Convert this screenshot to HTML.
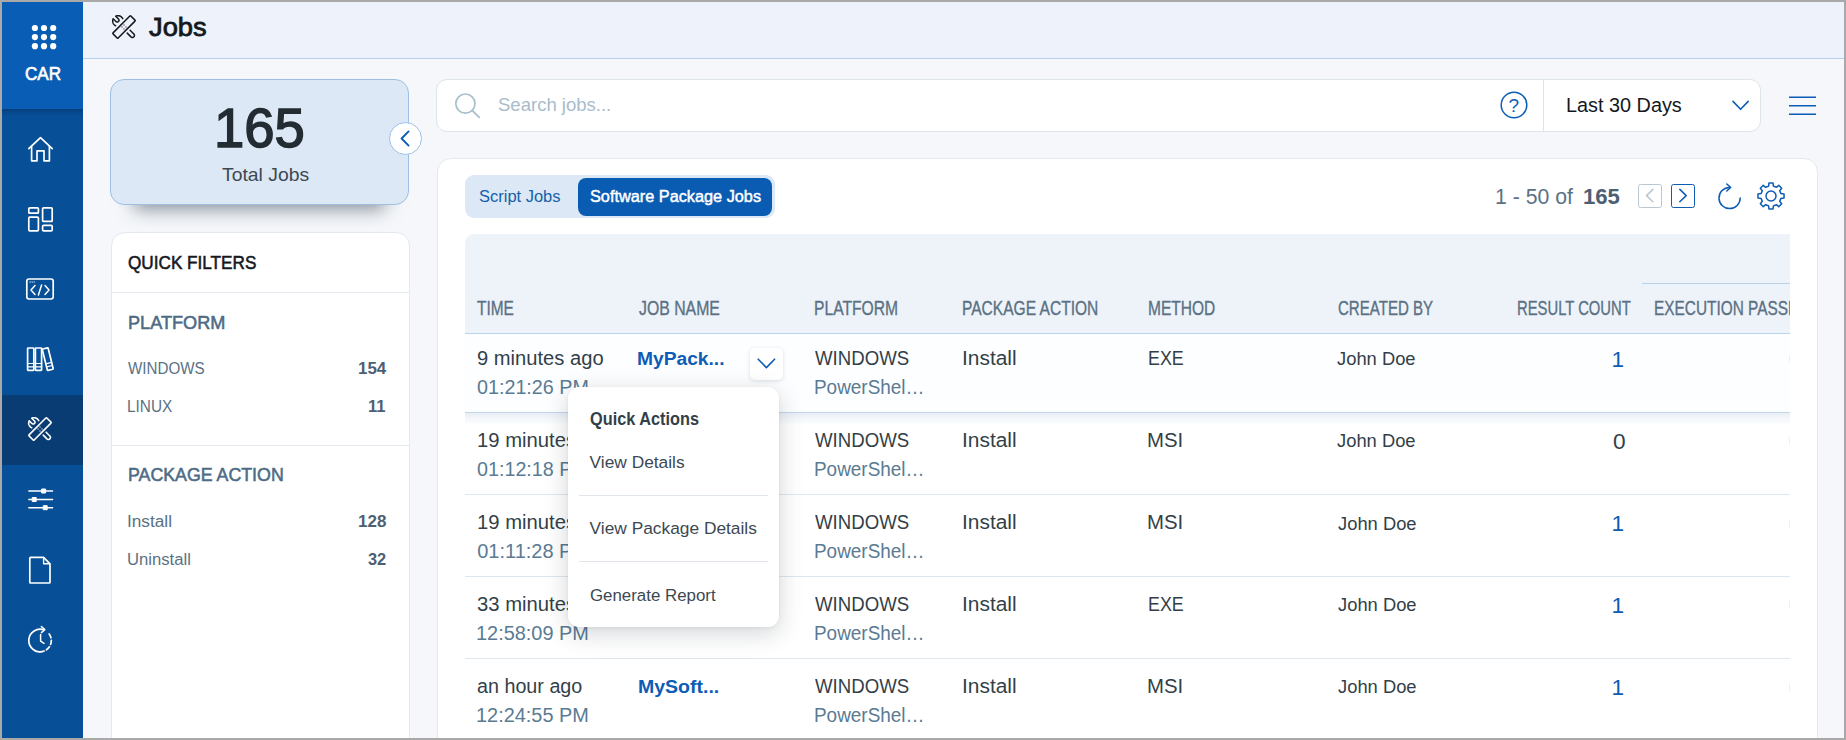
<!DOCTYPE html>
<html lang="en">
<head>
<meta charset="utf-8">
<title>Jobs</title>
<style>
*{box-sizing:border-box;margin:0;padding:0}
html,body{width:1846px;height:740px;overflow:hidden;background:#f5f7fa}
body{font-family:"Liberation Sans",sans-serif;position:relative;color:#333f48}
.t{position:absolute;white-space:nowrap}
.abs{position:absolute}
.frame{position:absolute;left:0;top:0;width:1846px;height:740px;box-shadow:inset 0 0 0 2px #a9a9a9;pointer-events:none;z-index:100}
.side{position:absolute;left:0;top:0;width:83px;height:740px;background:#074f96;overflow:hidden}
.brand{position:absolute;left:0;top:0;width:83px;height:109px;background:#0a5db4;box-shadow:0 2px 4px rgba(0,20,60,.35)}
.active{position:absolute;left:0;top:395px;width:83px;height:70px;background:#083c73}
.top{position:absolute;left:83px;top:0;width:1763px;height:59px;background:#eef3fb;border-bottom:1px solid #b5d0ea}
.stat{position:absolute;left:110px;top:79px;width:299px;height:126px;background:#dce8f5;border:1px solid #9dbfe4;border-radius:14px;box-shadow:0 28px 17px -24px rgba(25,40,60,.5)}
.collapse{position:absolute;left:389px;top:122px;width:33px;height:33px;border-radius:50%;background:#fff;border:1px solid #9dbfe4}
.qf{position:absolute;left:111px;top:232px;width:299px;height:520px;background:#fff;border:1px solid #e3e9ef;border-radius:14px}
.hr{position:absolute;height:1px;background:#e3e9ef}
.search{position:absolute;left:436px;top:79px;width:1325px;height:53px;background:#fff;border:1px solid #dde4ea;border-radius:11px}
.card{position:absolute;left:437px;top:158px;width:1381px;height:600px;background:#fff;border:1px solid #e3e9ef;border-radius:14px}
.tabs{position:absolute;left:465px;top:175px;width:309.5px;height:43px;background:#dce8f5;border-radius:9px}
.tabon{position:absolute;left:578px;top:178px;width:194px;height:38px;background:#0a5cb3;border-radius:8px}
.thead{position:absolute;left:465px;top:234px;width:1325px;height:100px;background:#eef3fa;border-bottom:1px solid #b9d3ea;border-radius:9px 0 0 0}
.rowline{position:absolute;left:465px;width:1325px;height:1px;background:#dfe7ee}
.pg{position:absolute;top:183.8px;width:24px;height:24px;border-radius:2.5px;border:1.4px solid #0d5cb5}
.ddbtn{position:absolute;left:750px;top:348px;width:33px;height:32px;border-radius:5px;background:#fff;box-shadow:0 1px 4px rgba(60,80,110,.18)}
.pop{position:absolute;left:568px;top:387px;width:211px;height:240px;border-radius:11px;background:#fff;box-shadow:0 6px 24px rgba(20,30,45,.19),0 1px 4px rgba(20,30,45,.06)}
svg{position:absolute;overflow:visible}
</style>
</head>
<body>
<div class="side"><div class="active"></div><div class="brand"></div></div>
<svg width="83" height="109" style="left:0;top:0" fill="#fff"><circle cx="34.9" cy="28" r="3.1"/><circle cx="44" cy="28" r="3.1"/><circle cx="53.2" cy="28" r="3.1"/><circle cx="34.9" cy="37.1" r="3.1"/><circle cx="44" cy="37.1" r="3.1"/><circle cx="53.2" cy="37.1" r="3.1"/><circle cx="34.9" cy="46.2" r="3.1"/><circle cx="44" cy="46.2" r="3.1"/><circle cx="53.2" cy="46.2" r="3.1"/></svg>
<div class="t" style="top:64.04px;font-size:17.5px;line-height:21px;color:#fff;-webkit-text-stroke:0.6px #fff;left:25.00px;transform:scaleX(0.9777);transform-origin:left center;">CAR</div>
<svg width="83" height="740" style="left:0;top:0" fill="none" stroke="#fff" stroke-width="1.7" stroke-linecap="round" stroke-linejoin="round"><path d="M28.8 148.6 L40.5 137.6 L52.2 148.6"/><path d="M31.6 146.4 V160.8 H37 V150.8 H44 V160.8 H49.4 V146.4"/><rect x="28.8" y="207.8" width="9.6" height="5.4" rx="1"/><rect x="28.8" y="217.2" width="9.6" height="13.6" rx="1"/><rect x="42.6" y="207.8" width="9.6" height="13.6" rx="1"/><rect x="42.6" y="225.4" width="9.6" height="5.4" rx="1"/><rect x="26.8" y="279" width="26.4" height="20" rx="2.2"/><path d="M35 285.5 L31 290 L35 294.5 M45 285.5 L49 290 L45 294.5 M41.6 285 L38.4 295" stroke-width="1.5"/><path d="M30 282 h.4 M32 282 h.4 M34 282 h.4" stroke-width="1"/><rect x="27.6" y="348" width="6.2" height="22.4" rx=".6"/><rect x="35.4" y="348" width="6.2" height="22.4" rx=".6"/><path d="M27.6 363.5 h6.2 M27.6 366.8 h6.2 M35.4 363.5 h6.2 M35.4 366.8 h6.2" stroke-width="1.2"/><g transform="rotate(-14 47.4 359)"><rect x="44.7" y="348.2" width="6" height="22" rx=".6"/><path d="M44.7 363.3 h6 M44.7 366.5 h6" stroke-width="1.2"/></g><path d="M28.8 491 H52.6 M28.8 499.5 H52.6 M28.8 507.7 H52.6" stroke-width="1.4"/><rect x="42" y="489" width="3.6" height="4" fill="#fff" stroke-width="1"/><rect x="32.6" y="497.5" width="3.6" height="4" fill="#fff" stroke-width="1"/><rect x="43.6" y="505.7" width="3.6" height="4" fill="#fff" stroke-width="1"/><path d="M30.6 557.4 H43.6 L50 563.8 V582.2 Q50 583 49.2 583 H30.6 Q29.8 583 29.8 582.2 V558.2 Q29.8 557.4 30.6 557.4 Z"/><path d="M43.6 557.6 V563.8 H49.8" stroke-width="1.4"/><path d="M43.4 629.7 A11.3 11.3 0 1 0 40 651.8"/><path d="M40 651.8 A11.3 11.3 0 0 0 51.3 640.5 A11.3 11.3 0 0 0 47.6 632.1" stroke-dasharray="4.2 2.6"/><path d="M41.4 626.6 L44.8 629.6 L41.4 632.6" stroke-width="1.5"/><path d="M40.6 634.6 V641.2 L44 643.4" stroke-width="1.5"/></svg>
<svg width="30" height="30" style="left:24.9px;top:414px" viewBox="-15 -15 30 30" fill="none" stroke="#fff" stroke-width="1.6" stroke-linecap="round" stroke-linejoin="round"><g transform="scale(1)"><rect x="-12.6" y="-3.6" width="25.2" height="7.2" rx=".7" transform="rotate(-45)"/><g fill="#cfe0f2" stroke="none"><circle cx="-2.00" cy="0.00" r=".7"/><circle cx="2.00" cy="0.00" r=".7"/><circle cx="0.00" cy="2.00" r=".7"/><circle cx="0.00" cy="-2.00" r=".7"/></g><path d="M6.12 3.22 L9.86 6.97 L10.24 7.48 L10.44 8.09 L10.44 8.74 L10.24 9.35 L9.86 9.86 L9.35 10.24 L8.74 10.44 L8.09 10.44 L7.48 10.24 L6.97 9.86 L3.22 6.12"/><path d="M-1.26 -8.35 L-1.54 -8.86 L-1.89 -9.34 L-2.28 -9.78 L-2.72 -10.17 L-3.20 -10.50 L-3.71 -10.79 L-4.26 -11.01 L-4.82 -11.18 L-5.40 -11.28 L-5.99 -11.31 L-6.57 -11.28 L-7.15 -11.19 L-7.72 -11.03 L-8.26 -10.81 L-5.52 -8.06 L-5.52 -8.06 L-5.18 -7.61 L-5.01 -7.07 L-5.01 -6.51 L-5.18 -5.97 L-5.52 -5.52 L-5.97 -5.18 L-6.51 -5.01 L-7.07 -5.01 L-7.61 -5.18 L-8.06 -5.52 L-10.81 -8.26 L-10.81 -8.26 L-11.03 -7.72 L-11.19 -7.15 L-11.28 -6.57 L-11.31 -5.99 L-11.28 -5.40 L-11.18 -4.82 L-11.01 -4.26 L-10.79 -3.71 L-10.50 -3.20 L-10.17 -2.72 L-9.78 -2.28 L-9.34 -1.89 L-8.86 -1.54 L-8.35 -1.26"/></g></svg>
<div class="top"></div>
<svg width="30" height="30" style="left:108.65px;top:11.899999999999999px" viewBox="-15 -15 30 30" fill="none" stroke="#15191d" stroke-width="1.5" stroke-linecap="round" stroke-linejoin="round"><g transform="scale(1)"><rect x="-12.6" y="-3.6" width="25.2" height="7.2" rx=".7" transform="rotate(-45)"/><g fill="#6b3f63" stroke="none"><circle cx="-2.00" cy="0.00" r=".7"/><circle cx="2.00" cy="0.00" r=".7"/><circle cx="0.00" cy="2.00" r=".7"/><circle cx="0.00" cy="-2.00" r=".7"/></g><path d="M6.12 3.22 L9.86 6.97 L10.24 7.48 L10.44 8.09 L10.44 8.74 L10.24 9.35 L9.86 9.86 L9.35 10.24 L8.74 10.44 L8.09 10.44 L7.48 10.24 L6.97 9.86 L3.22 6.12"/><path d="M-1.26 -8.35 L-1.54 -8.86 L-1.89 -9.34 L-2.28 -9.78 L-2.72 -10.17 L-3.20 -10.50 L-3.71 -10.79 L-4.26 -11.01 L-4.82 -11.18 L-5.40 -11.28 L-5.99 -11.31 L-6.57 -11.28 L-7.15 -11.19 L-7.72 -11.03 L-8.26 -10.81 L-5.52 -8.06 L-5.52 -8.06 L-5.18 -7.61 L-5.01 -7.07 L-5.01 -6.51 L-5.18 -5.97 L-5.52 -5.52 L-5.97 -5.18 L-6.51 -5.01 L-7.07 -5.01 L-7.61 -5.18 L-8.06 -5.52 L-10.81 -8.26 L-10.81 -8.26 L-11.03 -7.72 L-11.19 -7.15 L-11.28 -6.57 L-11.31 -5.99 L-11.28 -5.40 L-11.18 -4.82 L-11.01 -4.26 L-10.79 -3.71 L-10.50 -3.20 L-10.17 -2.72 L-9.78 -2.28 L-9.34 -1.89 L-8.86 -1.54 L-8.35 -1.26"/></g></svg>
<div class="t" style="top:12.19px;font-size:26px;line-height:31px;color:#15191d;-webkit-text-stroke:0.8px #15191d;left:148.70px;transform:scaleX(1.0506);transform-origin:left center;">Jobs</div>
<div class="stat"></div>
<div class="t" style="top:98.20px;font-size:56px;line-height:60px;color:#232c33;-webkit-text-stroke:1.5px #232c33;left:214.46px;transform:scaleX(0.9726);transform-origin:left center;">165</div>
<div class="t" style="top:163.53px;font-size:18.67px;line-height:22px;color:#3c4852;left:221.80px;transform:scaleX(1.0374);transform-origin:left center;">Total Jobs</div>
<div class="collapse"></div>
<svg width="33" height="33" style="left:389px;top:122px" fill="none" stroke="#0d5cb5" stroke-width="1.9" stroke-linecap="round" stroke-linejoin="round"><path d="M19.6 9.4 L12.6 16.5 L19.6 23.6"/></svg>
<div class="qf"></div>
<div class="t" style="top:251.73px;font-size:18.67px;line-height:22px;color:#15191d;-webkit-text-stroke:0.55px #15191d;left:128.38px;transform:scaleX(0.9195);transform-origin:left center;">QUICK FILTERS</div>
<div class="hr" style="left:112px;top:292px;width:297px"></div>
<div class="t" style="top:312.43px;font-size:18.67px;line-height:22px;color:#4d6b85;-webkit-text-stroke:0.55px #4d6b85;left:127.60px;transform:scaleX(0.9716);transform-origin:left center;">PLATFORM</div>
<div class="t" style="top:358.76px;font-size:16px;line-height:19px;color:#5a7184;left:128.30px;transform:scaleX(0.9476);transform-origin:left center;">WINDOWS</div>
<div class="t" style="top:358.76px;font-size:16px;line-height:19px;color:#4d6073;left:358.15px;font-weight:bold;transform:scaleX(1.0544);transform-origin:left center;">154</div>
<div class="t" style="top:396.96px;font-size:16px;line-height:19px;color:#5a7184;left:127.34px;transform:scaleX(0.9623);transform-origin:left center;">LINUX</div>
<div class="t" style="top:396.96px;font-size:16px;line-height:19px;color:#4d6073;left:367.66px;font-weight:bold;transform:scaleX(1.0365);transform-origin:left center;">11</div>
<div class="hr" style="left:112px;top:445px;width:297px"></div>
<div class="t" style="top:464.23px;font-size:18.67px;line-height:22px;color:#4d6b85;-webkit-text-stroke:0.55px #4d6b85;left:127.82px;transform:scaleX(0.9527);transform-origin:left center;">PACKAGE ACTION</div>
<div class="t" style="top:511.86px;font-size:16px;line-height:19px;color:#5a7184;left:127.42px;transform:scaleX(1.076);transform-origin:left center;">Install</div>
<div class="t" style="top:511.86px;font-size:16px;line-height:19px;color:#4d6073;left:358.04px;font-weight:bold;transform:scaleX(1.0621);transform-origin:left center;">128</div>
<div class="t" style="top:549.76px;font-size:16px;line-height:19px;color:#5a7184;left:127.46px;transform:scaleX(1.0417);transform-origin:left center;">Uninstall</div>
<div class="t" style="top:549.76px;font-size:16px;line-height:19px;color:#4d6073;left:368.20px;font-weight:bold;transform:scaleX(1.0224);transform-origin:left center;">32</div>
<div class="search"></div>
<svg width="30" height="30" style="left:453px;top:91px" fill="none" stroke="#a9bfcc" stroke-width="1.7" stroke-linecap="round"><circle cx="12.4" cy="12.6" r="9.6"/><path d="M19.4 19.6 L26.2 26.4"/></svg>
<div class="t" style="top:94.23px;font-size:18.67px;line-height:22px;color:#a9bccb;left:498.00px;transform:scaleX(0.993);transform-origin:left center;">Search jobs...</div>
<svg width="30" height="30" style="left:1499px;top:90px" fill="none" stroke="#0d5cb5" stroke-width="1.5"><circle cx="15" cy="15" r="12.8"/></svg>
<div class="t" style="top:93.52px;font-size:19px;line-height:23px;color:#0d5cb5;left:1508.60px;">?</div>
<div class="abs" style="left:1543px;top:80px;width:1px;height:51px;background:#dde4ea"></div>
<div class="t" style="top:92.87px;font-size:20px;line-height:24px;color:#15191d;left:1565.51px;transform:scaleX(0.992);transform-origin:left center;">Last 30 Days</div>
<svg width="20" height="12" style="left:1731px;top:100px" fill="none" stroke="#0d5cb5" stroke-width="1.6" stroke-linecap="round" stroke-linejoin="round"><path d="M2 1.4 L9.6 9.3 L17.2 1.4"/></svg>
<svg width="28" height="20" style="left:1789px;top:96px" stroke="#0d5cb5" stroke-width="1.6"><path d="M0 1.2 H27 M0 9.7 H27 M0 18.2 H27"/></svg>
<div class="card"></div>
<div class="tabs"></div>
<div class="tabon"></div>
<div class="t" style="top:186.96px;font-size:16px;line-height:19px;color:#1460aa;left:479.30px;transform:scaleX(1.0298);transform-origin:left center;">Script Jobs</div>
<div class="t" style="top:186.96px;font-size:16px;line-height:19px;color:#fff;-webkit-text-stroke:0.45px #fff;left:589.62px;transform:scaleX(1.0176);transform-origin:left center;">Software Package Jobs</div>
<div class="t" style="top:184.31px;font-size:21.33px;line-height:26px;color:#5a7184;left:1495.41px;transform:scaleX(0.9945);transform-origin:left center;">1 - 50 of</div>
<div class="t" style="top:184.31px;font-size:21.33px;line-height:26px;color:#4d6073;left:1582.96px;font-weight:bold;transform:scaleX(1.0368);transform-origin:left center;">165</div>
<div class="pg" style="left:1638px;border-color:#b7c7d4"></div><div class="pg" style="left:1670.5px"></div>
<svg width="60" height="26" style="left:1638px;top:183.3px" fill="none" stroke-width="1.5" stroke-linecap="round" stroke-linejoin="round"><path d="M14.9 6.4 L8.5 12.6 L14.9 18.8" stroke="#b7c7d4"/><path d="M41.8 6.4 L48.2 12.6 L41.8 18.8" stroke="#0d5cb5"/></svg>
<svg width="30" height="30" style="left:1715px;top:182px" fill="none" stroke="#0d5cb5" stroke-width="1.5" stroke-linecap="round" stroke-linejoin="round"><path d="M14 5.4 A10.6 10.6 0 1 0 25.2 16"/><path d="M11.8 2 L15.6 5.4 L11.8 9"/></svg>
<svg width="30" height="30" style="left:1755.6px;top:181.2px" fill="none" stroke="#0d5cb5" stroke-width="1.5" stroke-linejoin="round"><path d="M12.62 5.08 L12.94 1.96 L17.06 1.96 L17.38 5.08 L20.33 6.30 L22.76 4.32 L25.68 7.24 L23.70 9.67 L24.92 12.62 L28.04 12.94 L28.04 17.06 L24.92 17.38 L23.70 20.33 L25.68 22.76 L22.76 25.68 L20.33 23.70 L17.38 24.92 L17.06 28.04 L12.94 28.04 L12.62 24.92 L9.67 23.70 L7.24 25.68 L4.32 22.76 L6.30 20.33 L5.08 17.38 L1.96 17.06 L1.96 12.94 L5.08 12.62 L6.30 9.67 L4.32 7.24 L7.24 4.32 L9.67 6.30 Z"/><circle cx="15" cy="15" r="5"/></svg>
<div class="thead"></div>
<div class="abs" style="left:1642px;top:283px;width:148px;height:1px;background:#b9d3ea"></div>
<div class="t" style="top:296.17px;font-size:20px;line-height:24px;color:#5a7184;-webkit-text-stroke:0.35px #5a7184;left:477.38px;transform:scaleX(0.7727);transform-origin:left center;">TIME</div>
<div class="t" style="top:296.17px;font-size:20px;line-height:24px;color:#5a7184;-webkit-text-stroke:0.35px #5a7184;left:639.17px;transform:scaleX(0.7915);transform-origin:left center;">JOB NAME</div>
<div class="t" style="top:296.17px;font-size:20px;line-height:24px;color:#5a7184;-webkit-text-stroke:0.35px #5a7184;left:813.89px;transform:scaleX(0.7834);transform-origin:left center;">PLATFORM</div>
<div class="t" style="top:296.17px;font-size:20px;line-height:24px;color:#5a7184;-webkit-text-stroke:0.35px #5a7184;left:962.10px;transform:scaleX(0.7778);transform-origin:left center;">PACKAGE ACTION</div>
<div class="t" style="top:296.17px;font-size:20px;line-height:24px;color:#5a7184;-webkit-text-stroke:0.35px #5a7184;left:1147.80px;transform:scaleX(0.7763);transform-origin:left center;">METHOD</div>
<div class="t" style="top:296.17px;font-size:20px;line-height:24px;color:#5a7184;-webkit-text-stroke:0.35px #5a7184;left:1337.52px;transform:scaleX(0.7525);transform-origin:left center;">CREATED BY</div>
<div class="t" style="top:296.17px;font-size:20px;line-height:24px;color:#5a7184;-webkit-text-stroke:0.35px #5a7184;left:1516.63px;transform:scaleX(0.7402);transform-origin:left center;">RESULT COUNT</div>
<div class="abs" style="left:1640px;top:290px;width:150px;height:40px;overflow:hidden"><div class="t" style="top:6.17px;font-size:20px;line-height:24px;color:#5a7184;-webkit-text-stroke:0.35px #5a7184;left:14.10px;transform:scaleX(0.77);transform-origin:left center;">EXECUTION PASSED</div>
</div>
<div class="abs" style="left:465px;top:334px;width:1325px;height:78px;background:#fdfeff"></div>
<div class="abs" style="left:465px;top:413px;width:1325px;height:12px;background:linear-gradient(#e9eff6,rgba(255,255,255,0))"></div>
<div class="rowline" style="top:412px;background:#c3d6e8"></div>
<div class="t" style="top:346.07px;font-size:20px;line-height:24px;color:#333f48;left:477.20px;transform:scaleX(1.0079);transform-origin:left center;">9 minutes ago</div>
<div class="t" style="top:375.07px;font-size:20px;line-height:24px;color:#5a7b93;left:477.20px;transform:scaleX(0.9863);transform-origin:left center;">01:21:26 PM</div>
<div class="t" style="top:347.53px;font-size:18.67px;line-height:22px;color:#0d5cb5;left:637.37px;font-weight:bold;transform:scaleX(1.0295);transform-origin:left center;">MyPack...</div>
<div class="t" style="top:346.07px;font-size:20px;line-height:24px;color:#333f48;left:814.50px;transform:scaleX(0.932);transform-origin:left center;">WINDOWS</div>
<div class="t" style="top:375.07px;font-size:20px;line-height:24px;color:#5a7b93;left:813.65px;transform:scaleX(0.9462);transform-origin:left center;">PowerShel…</div>
<div class="t" style="top:346.07px;font-size:20px;line-height:24px;color:#333f48;left:961.85px;transform:scaleX(1.0452);transform-origin:left center;">Install</div>
<div class="t" style="top:346.07px;font-size:20px;line-height:24px;color:#333f48;left:1147.51px;transform:scaleX(0.8945);transform-origin:left center;">EXE</div>
<div class="t" style="top:348.03px;font-size:18.67px;line-height:22px;color:#333f48;left:1336.50px;transform:scaleX(0.9838);transform-origin:left center;">John Doe</div>
<div class="t" style="top:346.34px;font-size:22.67px;line-height:27px;color:#0d5cb5;right:221.80px;">1</div>
<div class="abs" style="left:1788.5px;top:355px;width:1.5px;height:8px;background:#eef1f4;border-radius:1px"></div>
<div class="rowline" style="top:494px"></div>
<div class="t" style="top:428.07px;font-size:20px;line-height:24px;color:#333f48;left:476.80px;transform:scaleX(1.012);transform-origin:left center;">19 minutes ago</div>
<div class="t" style="top:457.07px;font-size:20px;line-height:24px;color:#5a7b93;left:477.20px;transform:scaleX(0.9863);transform-origin:left center;">01:12:18 PM</div>
<div class="t" style="top:429.53px;font-size:18.67px;line-height:22px;color:#0d5cb5;left:637.37px;font-weight:bold;transform:scaleX(1.0295);transform-origin:left center;">MyPack...</div>
<div class="t" style="top:428.07px;font-size:20px;line-height:24px;color:#333f48;left:814.50px;transform:scaleX(0.932);transform-origin:left center;">WINDOWS</div>
<div class="t" style="top:457.07px;font-size:20px;line-height:24px;color:#5a7b93;left:813.65px;transform:scaleX(0.9462);transform-origin:left center;">PowerShel…</div>
<div class="t" style="top:428.07px;font-size:20px;line-height:24px;color:#333f48;left:961.85px;transform:scaleX(1.0452);transform-origin:left center;">Install</div>
<div class="t" style="top:428.07px;font-size:20px;line-height:24px;color:#333f48;left:1147.38px;transform:scaleX(1.0182);transform-origin:left center;">MSI</div>
<div class="t" style="top:430.03px;font-size:18.67px;line-height:22px;color:#333f48;left:1336.50px;transform:scaleX(0.9838);transform-origin:left center;">John Doe</div>
<div class="t" style="top:428.34px;font-size:22.67px;line-height:27px;color:#333f48;right:220.50px;">0</div>
<div class="abs" style="left:1788.5px;top:437px;width:1.5px;height:8px;background:#eef1f4;border-radius:1px"></div>
<div class="rowline" style="top:576px"></div>
<div class="t" style="top:510.07px;font-size:20px;line-height:24px;color:#333f48;left:476.80px;transform:scaleX(1.012);transform-origin:left center;">19 minutes ago</div>
<div class="t" style="top:539.07px;font-size:20px;line-height:24px;color:#5a7b93;left:477.20px;">01:11:28 PM</div>
<div class="t" style="top:511.53px;font-size:18.67px;line-height:22px;color:#0d5cb5;left:637.37px;font-weight:bold;transform:scaleX(1.0295);transform-origin:left center;">MyPack...</div>
<div class="t" style="top:510.07px;font-size:20px;line-height:24px;color:#333f48;left:814.50px;transform:scaleX(0.932);transform-origin:left center;">WINDOWS</div>
<div class="t" style="top:539.07px;font-size:20px;line-height:24px;color:#5a7b93;left:813.65px;transform:scaleX(0.9462);transform-origin:left center;">PowerShel…</div>
<div class="t" style="top:510.07px;font-size:20px;line-height:24px;color:#333f48;left:961.85px;transform:scaleX(1.0452);transform-origin:left center;">Install</div>
<div class="t" style="top:510.07px;font-size:20px;line-height:24px;color:#333f48;left:1147.38px;transform:scaleX(1.0182);transform-origin:left center;">MSI</div>
<div class="t" style="top:512.93px;font-size:18.67px;line-height:22px;color:#333f48;left:1338.30px;transform:scaleX(0.9838);transform-origin:left center;">John Doe</div>
<div class="t" style="top:510.34px;font-size:22.67px;line-height:27px;color:#0d5cb5;right:221.80px;">1</div>
<div class="abs" style="left:1788.5px;top:519px;width:1.5px;height:8px;background:#eef1f4;border-radius:1px"></div>
<div class="rowline" style="top:658px"></div>
<div class="t" style="top:592.07px;font-size:20px;line-height:24px;color:#333f48;left:476.80px;transform:scaleX(1.012);transform-origin:left center;">33 minutes ago</div>
<div class="t" style="top:621.07px;font-size:20px;line-height:24px;color:#5a7b93;left:476.20px;transform:scaleX(0.9951);transform-origin:left center;">12:58:09 PM</div>
<div class="t" style="top:593.53px;font-size:18.67px;line-height:22px;color:#0d5cb5;left:637.37px;font-weight:bold;transform:scaleX(1.0295);transform-origin:left center;">MyPack...</div>
<div class="t" style="top:592.07px;font-size:20px;line-height:24px;color:#333f48;left:814.50px;transform:scaleX(0.932);transform-origin:left center;">WINDOWS</div>
<div class="t" style="top:621.07px;font-size:20px;line-height:24px;color:#5a7b93;left:813.65px;transform:scaleX(0.9462);transform-origin:left center;">PowerShel…</div>
<div class="t" style="top:592.07px;font-size:20px;line-height:24px;color:#333f48;left:961.85px;transform:scaleX(1.0452);transform-origin:left center;">Install</div>
<div class="t" style="top:592.07px;font-size:20px;line-height:24px;color:#333f48;left:1147.51px;transform:scaleX(0.8945);transform-origin:left center;">EXE</div>
<div class="t" style="top:594.03px;font-size:18.67px;line-height:22px;color:#333f48;left:1337.50px;transform:scaleX(0.9838);transform-origin:left center;">John Doe</div>
<div class="t" style="top:592.34px;font-size:22.67px;line-height:27px;color:#0d5cb5;right:221.80px;">1</div>
<div class="abs" style="left:1788.5px;top:601px;width:1.5px;height:8px;background:#eef1f4;border-radius:1px"></div>
<div class="rowline" style="top:740px"></div>
<div class="t" style="top:674.07px;font-size:20px;line-height:24px;color:#333f48;left:477.20px;transform:scaleX(0.9865);transform-origin:left center;">an hour ago</div>
<div class="t" style="top:703.07px;font-size:20px;line-height:24px;color:#5a7b93;left:476.20px;transform:scaleX(0.9951);transform-origin:left center;">12:24:55 PM</div>
<div class="t" style="top:675.53px;font-size:18.67px;line-height:22px;color:#0d5cb5;left:637.75px;font-weight:bold;transform:scaleX(1.0457);transform-origin:left center;">MySoft...</div>
<div class="t" style="top:674.07px;font-size:20px;line-height:24px;color:#333f48;left:814.50px;transform:scaleX(0.932);transform-origin:left center;">WINDOWS</div>
<div class="t" style="top:703.07px;font-size:20px;line-height:24px;color:#5a7b93;left:813.65px;transform:scaleX(0.9462);transform-origin:left center;">PowerShel…</div>
<div class="t" style="top:674.07px;font-size:20px;line-height:24px;color:#333f48;left:961.85px;transform:scaleX(1.0452);transform-origin:left center;">Install</div>
<div class="t" style="top:674.07px;font-size:20px;line-height:24px;color:#333f48;left:1147.38px;transform:scaleX(1.0182);transform-origin:left center;">MSI</div>
<div class="t" style="top:676.03px;font-size:18.67px;line-height:22px;color:#333f48;left:1337.50px;transform:scaleX(0.9838);transform-origin:left center;">John Doe</div>
<div class="t" style="top:674.34px;font-size:22.67px;line-height:27px;color:#0d5cb5;right:221.80px;">1</div>
<div class="abs" style="left:1788.5px;top:683px;width:1.5px;height:8px;background:#eef1f4;border-radius:1px"></div>
<div class="ddbtn"></div>
<svg width="20" height="12" style="left:757px;top:358.4px" fill="none" stroke="#0d5cb5" stroke-width="1.6" stroke-linecap="round" stroke-linejoin="round"><path d="M1.2 1.2 L9.4 9.6 L17.6 1.2"/></svg>
<div class="pop"></div>
<div class="t" style="top:408.74px;font-size:17.5px;line-height:21px;color:#333f48;left:589.70px;font-weight:bold;transform:scaleX(0.9311);transform-origin:left center;">Quick Actions</div>
<div class="t" style="top:452.10px;font-size:17.33px;line-height:21px;color:#3c4852;left:589.60px;">View Details</div>
<div class="hr" style="left:579px;top:495px;width:189px;background:#dfe5ea"></div>
<div class="t" style="top:518.00px;font-size:17.33px;line-height:21px;color:#3c4852;left:589.60px;">View Package Details</div>
<div class="hr" style="left:579px;top:561px;width:189px;background:#dfe5ea"></div>
<div class="t" style="top:584.50px;font-size:17.33px;line-height:21px;color:#3c4852;left:590.10px;transform:scaleX(0.9732);transform-origin:left center;">Generate Report</div>
<div class="frame"></div>
</body>
</html>
